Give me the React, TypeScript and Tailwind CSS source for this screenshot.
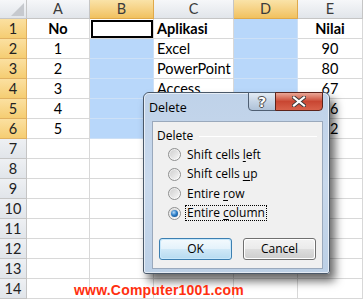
import React from "react";

const cols = [
  { key: "A", w: "w-[63px]", align: "justify-center", sel: false },
  { key: "B", w: "w-[64px]", align: "justify-center", sel: true },
  { key: "C", w: "w-[80px]", align: "justify-start pl-[3px]", sel: false },
  { key: "D", w: "w-[64px]", align: "justify-center", sel: true },
  { key: "E", w: "w-[65px]", align: "justify-center", sel: false },
];

// C5 and C6 sit fully behind the dialog
const rows: string[][] = [
  ["No", "", "Aplikasi", "", "Nilai"],
  ["1", "", "Excel", "", "90"],
  ["2", "", "PowerPoint", "", "80"],
  ["3", "", "Access", "", "67"],
  ["4", "", "", "", "76"],
  ["5", "", "", "", "72"],
  ["", "", "", "", ""],
  ["", "", "", "", ""],
  ["", "", "", "", ""],
  ["", "", "", "", ""],
  ["", "", "", "", ""],
  ["", "", "", "", ""],
  ["", "", "", "", ""],
  ["", "", "", "", ""],
];

function Radio({ checked }: { checked?: boolean }) {
  return (
    <div className="w-[13px] h-[13px] rounded-full border border-[#8e8f8f] bg-gradient-to-br from-[#e6e6e6] to-[#ffffff] flex items-center justify-center">
      <div className="w-[9px] h-[9px] rounded-full bg-gradient-to-br from-[#d0d0d0] to-[#f6f6f6] flex items-center justify-center">
        {checked && (
          <div className="w-[7px] h-[7px] rounded-full bg-[radial-gradient(circle_at_40%_35%,#b9dcf9_0%,#2d7fc8_45%,#0d3f7a_100%)]" />
        )}
      </div>
    </div>
  );
}

function Option({ pre, key2, post, checked }: { pre: string; key2: string; post: string; checked?: boolean }) {
  return (
    <div className="flex items-center h-[19.5px] pl-[15px]">
      <Radio checked={checked} />
      <span
        className={
          "ml-[4px] px-[1px] leading-[14px] " +
          (checked ? "border border-dotted border-black" : "border border-transparent")
        }
      >
        {pre}
        <span className="underline underline-offset-2">{key2}</span>
        {post}
      </span>
    </div>
  );
}

function Dialog() {
  return (
    <div className="absolute left-[143px] top-[92px] w-[187px] h-[182px] rounded-t-[6px] rounded-b-[3px] border border-[#4a5868] bg-gradient-to-b from-[#bfd2e9] via-[#c9d9ec] to-[#bcd0e6] shadow-[5px_7px_10px_rgba(0,0,0,0.6)] font-['Open_Sans',sans-serif] text-[12px] text-black">
      <div className="absolute inset-0 rounded-t-[5px] rounded-b-[2px] border border-white/60" />
      <div className="absolute left-[5px] top-[6px] text-[12.5px]">Delete</div>
      <div className="absolute left-[104px] top-[-1px] w-[28px] h-[19px] rounded-bl-[4px] border border-[#4f5f73] bg-gradient-to-b from-[#e3ebf4] via-[#c6d5e6] to-[#afc2d8] flex items-center justify-center">
        <span className="text-white font-bold text-[14px] leading-none [text-shadow:0_0_1px_#333,1px_0_0_#555,-1px_0_0_#555,0_1px_0_#555,0_-1px_0_#555] font-['DejaVu_Sans',sans-serif]">?</span>
      </div>
      <div className="absolute left-[131px] top-[-1px] w-[48px] h-[19px] rounded-br-[4px] border border-[#5c231b] bg-gradient-to-b from-[#e9a797] via-[#c94632] to-[#d8614a] flex items-center justify-center">
        <svg width="14" height="11" viewBox="0 0 14 11">
          <path d="M2 1.5 L12 9.5 M12 1.5 L2 9.5" stroke="#3a3a3a" strokeWidth="4" strokeLinecap="square" />
          <path d="M2 1.5 L12 9.5 M12 1.5 L2 9.5" stroke="#ffffff" strokeWidth="2.2" strokeLinecap="square" />
        </svg>
      </div>
      <div className="absolute left-[8px] top-[28px] w-[171px] h-[148px] border border-[#9aa9bc] bg-[#f0f0f0]">
        <div className="flex items-center pl-[4px] pr-[5px] pt-[5px] h-[22px]">
          <span>Delete</span>
          <div className="flex-1 ml-[6px] h-[1px] bg-[#d5dfe5] border-b border-white mt-[1px]" />
        </div>
        <div className="pt-[1px]">
          <Option pre="Shift cells " key2="l" post="eft" />
          <Option pre="Shift cells " key2="u" post="p" />
          <Option pre="Entire " key2="r" post="ow" />
          <Option pre="Entire " key2="c" post="olumn" checked />
        </div>
        <div className="flex justify-between px-[6px] mt-[15px]">
          <div className="w-[73px] h-[22px] rounded-[3px] border border-[#3c7fb1] p-[1px] bg-[#c8e8fb]">
            <div className="w-full h-full rounded-[2px] bg-[linear-gradient(#f2f9fd_0%,#e4f2fb_48%,#cfe8f7_52%,#b9dcf1_100%)] flex items-center justify-center">OK</div>
          </div>
          <div className="w-[73px] h-[22px] rounded-[3px] border border-[#707070] p-[1px] bg-white">
            <div className="w-full h-full rounded-[2px] bg-[linear-gradient(#f2f2f2_0%,#ebebeb_48%,#dddddd_52%,#cfcfcf_100%)] flex items-center justify-center">Cancel</div>
          </div>
        </div>
      </div>
    </div>
  );
}

export default function App() {
  return (
    <div className="relative w-[363px] h-[299px] overflow-hidden bg-white font-['Lato',sans-serif] text-[14.5px] text-black">
      <div className="flex h-[19px]">
        <div className="relative w-[27px] h-full border-r border-b border-[#c5c5c5] bg-gradient-to-b from-[#f6f7f9] to-[#e1e5ea]">
          <div className="absolute right-[2px] bottom-[2px] w-0 h-0 border-l-[13px] border-l-transparent border-b-[13px] border-b-[#c6c9ce]" />
        </div>
        {cols.map((c) => (
          <div
            key={c.key}
            className={
              c.w +
              " h-full flex items-center justify-center border-r border-b text-[#3b3b3b] " +
              (c.sel
                ? "bg-gradient-to-b from-[#fae3a8] to-[#f1c15e] border-[#e0a94a]"
                : "bg-gradient-to-b from-[#f6f7f9] to-[#e1e5ea] border-[#c5c5c5]")
            }
          >
            {c.key}
          </div>
        ))}
      </div>
      {rows.map((r, i) => (
        <div key={i} className="flex h-[20px]">
          <div
            className={
              "w-[27px] h-full flex items-center justify-center border-r border-b text-[#222] " +
              (i < 6
                ? "bg-gradient-to-b from-[#fbe0a0] to-[#f5cd72] border-[#e0b060]"
                : "bg-gradient-to-b from-[#eef0f3] to-[#e1e5ea] border-[#c5c5c5]")
            }
          >
            {i + 1}
          </div>
          {cols.map((c, j) => {
            const selected = c.sel && i < 6;
            const active = i === 0 && j === 1;
            return (
              <div
                key={c.key}
                className={
                  c.w +
                  " relative h-full flex items-center border-r border-b " +
                  c.align +
                  (selected && !active ? " bg-[#b8d7fa] border-[#cde0f6]" : " border-[#d8d8d8]") +
                  (i === 0 ? " font-bold" : "")
                }
              >
                {active && <div className="absolute left-[1px] top-[1px] right-0 bottom-0 border-2 border-black" />}
                {r[j]}
              </div>
            );
          })}
        </div>
      ))}
      <Dialog />
      <div className="absolute left-[74px] top-[282px] font-['Liberation_Sans',sans-serif] font-bold text-[14px] leading-[16px] text-[#ff3010] tracking-[0.2px]">
        www.Computer1001.com
      </div>
    </div>
  );
}
